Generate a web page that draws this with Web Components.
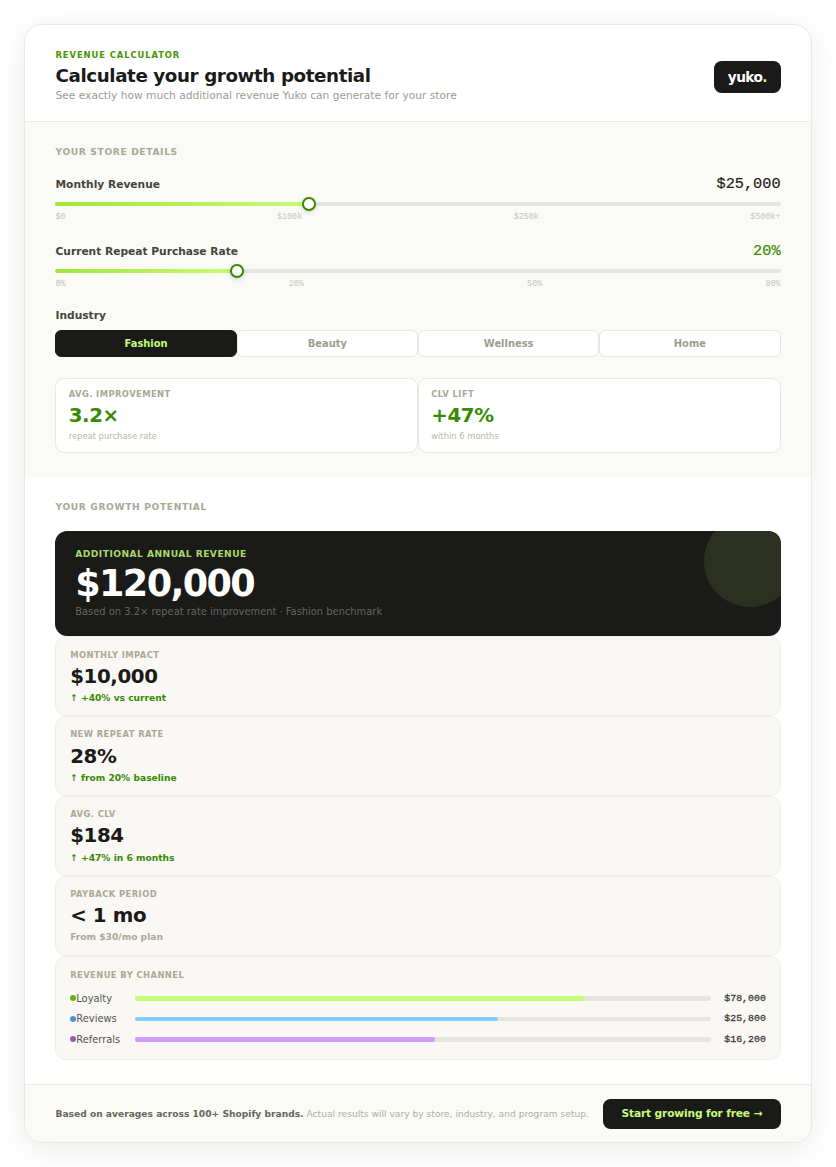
<!DOCTYPE html>
<html lang="en">
<head>
<meta charset="UTF-8">
<title>Yuko Revenue Calculator</title>
<style>
    :root {
        --ink: #1a1a18;
        --lime: #c8fa7a;
        --green: #388a00;
        --muted: #a8a896;
        --line: #e8e8e2;
        --track: #e6e5e0;
        --mono: "Liberation Mono", "Courier New", monospace;
    }

    html {
        background: #fff;
        overflow: hidden;
    }

    body {
        margin: 0;
        font-family: "DejaVu Sans", sans-serif;
        color: var(--ink);
    }

    revenue-calculator {
        zoom: 0.762;
        margin: 32px;
    }
</style>
</head>
<body>
<revenue-calculator>
    <calc-header slot="header" eyebrow="Revenue Calculator" heading="Calculate your growth potential">
        See exactly how much additional revenue Yuko can generate for your store
    </calc-header>

    <calc-section slot="inputs" heading="Your store details" tinted>
        <range-field label="Monthly Revenue" value="$25,000" percent="35" ticks="$0,$100k,$250k,$500k+"></range-field>
        <range-field label="Current Repeat Purchase Rate" value="20%" percent="25" ticks="0%,20%,50%,80%" accent></range-field>
        <option-group label="Industry" options="Fashion,Beauty,Wellness,Home" value="Fashion"></option-group>
        <stat-pair>
            <metric-card class="stat" label="Avg. improvement" value="3.2×">repeat purchase rate</metric-card>
            <metric-card class="stat" label="CLV lift" value="+47%">within 6 months</metric-card>
        </stat-pair>
    </calc-section>

    <calc-section slot="results" heading="Your growth potential">
        <hero-result label="Additional annual revenue" value="$120,000">Based on 3.2× repeat rate improvement · Fashion benchmark</hero-result>
        <metric-card label="Monthly impact" value="$10,000">↑ +40% vs current</metric-card>
        <metric-card label="New repeat rate" value="28%">↑ from 20% baseline</metric-card>
        <metric-card label="Avg. CLV" value="$184">↑ +47% in 6 months</metric-card>
        <metric-card class="neutral" label="Payback period" value="&lt; 1 mo">From $30/mo plan</metric-card>
        <channel-card heading="Revenue by channel">
            <channel-row label="Loyalty" value="$78,000" percent="78" dot="#5cb800" bar="#c8fa7a"></channel-row>
            <channel-row label="Reviews" value="$25,800" percent="63" dot="#4a90d9" bar="#85ccff"></channel-row>
            <channel-row label="Referrals" value="$16,200" percent="52" dot="#9b59b6" bar="#d09cff"></channel-row>
        </channel-card>
    </calc-section>

    <calc-footer slot="footer" action="Start growing for free →">
        <strong slot="lead">Based on averages across 100+ Shopify brands.</strong>
        Actual results will vary by store, industry, and program setup.
    </calc-footer>
</revenue-calculator>

<script>
    class BaseElement extends HTMLElement {
        constructor() {
            super();
            this.attachShadow({mode: 'open'});
        }

        attr(name) {
            return this.getAttribute(name) || "";
        }

        list(name) {
            return this.attr(name).split(",");
        }

        connectedCallback() {
            this.shadowRoot.innerHTML = this.render();
        }
    }

    class RevenueCalculator extends BaseElement {
        render() {
            return `
            <style>
                :host {
                    display: block;
                    box-sizing: border-box;
                    background: #fff;
                    border: 1px solid var(--line);
                    border-radius: 24px;
                    overflow: hidden;
                    box-shadow: 0 8px 40px rgba(0, 0, 0, 0.08);
                }
            </style>
            <slot name="header"></slot>
            <slot name="inputs"></slot>
            <slot name="results"></slot>
            <slot name="footer"></slot>
        `
        }
    }

    class CalcHeader extends BaseElement {
        render() {
            return `
            <style>
                :host {
                    display: flex;
                    justify-content: space-between;
                    align-items: center;
                    padding: 33.2px 39.5px 23.7px;
                    border-bottom: 1px solid #ecebe5;
                }

                .eyebrow {
                    font-size: 11px;
                    line-height: 13px;
                    font-weight: 700;
                    letter-spacing: 0.11em;
                    text-transform: uppercase;
                    color: #459800;
                }

                h1 {
                    margin: 0;
                    padding: 6.3px 0 4.8px;
                    font-size: 24px;
                    line-height: 28px;
                    letter-spacing: -0.022em;
                }

                p {
                    margin: 0;
                    font-size: 14px;
                    line-height: 17px;
                    color: #9c9c92;
                }

                .logo {
                    background: var(--ink);
                    color: #fff;
                    font-size: 18px;
                    line-height: 21px;
                    font-weight: 700;
                    letter-spacing: -0.045em;
                    padding: 10px 18px;
                    border-radius: 10px;
                }

                .logo span {
                    color: var(--lime);
                }
            </style>
            <div>
                <div class="eyebrow">${this.attr("eyebrow")}</div>
                <h1>${this.attr("heading")}</h1>
                <p><slot></slot></p>
            </div>
            <div class="logo">yuko<span>.</span></div>
        `
        }
    }

    class CalcSection extends BaseElement {
        render() {
            return `
            <style>
                :host {
                    display: block;
                    padding: 32px 39.5px;
                }

                :host([tinted]) {
                    background: #fafaf6;
                }

                h2 {
                    margin: 0 0 24px;
                    font-size: 12px;
                    line-height: 14px;
                    letter-spacing: 0.07em;
                    text-transform: uppercase;
                    color: var(--muted);
                }
            </style>
            <h2>${this.attr("heading")}</h2>
            <slot></slot>
        `
        }
    }

    class RangeField extends BaseElement {
        render() {
            return `
            <style>
                :host {
                    display: block;
                    margin-bottom: 28px;
                }

                .top {
                    display: flex;
                    justify-content: space-between;
                    align-items: baseline;
                    height: 23px;
                    margin-bottom: 11px;
                }

                .label {
                    font-size: 14px;
                    font-weight: 700;
                    color: #44443e;
                }

                .value {
                    font: 500 20px/23px var(--mono);
                    -webkit-text-stroke: 0.25px;
                }

                :host([accent]) .value {
                    color: var(--green);
                }

                .track {
                    display: flex;
                    align-items: center;
                    height: 6px;
                    border-radius: 3px;
                    background: var(--track);
                }

                .fill {
                    width: ${this.attr("percent")}%;
                    height: 6px;
                    border-radius: 3px;
                    background: linear-gradient(90deg, #a4e635, var(--lime));
                }

                .thumb {
                    box-sizing: border-box;
                    flex: none;
                    width: 18px;
                    height: 18px;
                    margin-left: -9px;
                    border: 3px solid var(--green);
                    border-radius: 50%;
                    background: #fff;
                    box-shadow: 0 2px 8px rgba(0, 0, 0, 0.15);
                }

                .ticks {
                    display: flex;
                    justify-content: space-between;
                    margin-top: 9px;
                    font: 11px/11px var(--mono);
                    color: #c6c6ba;
                }
            </style>
            <div class="top">
                <span class="label">${this.attr("label")}</span>
                <span class="value">${this.attr("value")}</span>
            </div>
            <div class="track"><div class="fill"></div><div class="thumb"></div></div>
            <div class="ticks">${this.list("ticks").map(tick => `<span>${tick}</span>`).join("")}</div>
        `
        }
    }

    class OptionGroup extends BaseElement {
        render() {
            const value = this.attr("value");
            return `
            <style>
                :host {
                    display: block;
                    margin-bottom: 28px;
                }

                .label {
                    margin-bottom: 10px;
                    font-size: 14px;
                    line-height: 17px;
                    font-weight: 700;
                    color: #44443e;
                }

                .options {
                    display: grid;
                    grid-template-columns: repeat(4, 1fr);
                }

                button {
                    height: 35px;
                    padding: 0;
                    border: 1.5px solid var(--line);
                    border-radius: 8px;
                    background: #fff;
                    font: 700 13px "DejaVu Sans", sans-serif;
                    color: #9c9c90;
                }

                button.active {
                    border-color: var(--ink);
                    background: var(--ink);
                    color: var(--lime);
                }
            </style>
            <div class="label">${this.attr("label")}</div>
            <div class="options">
                ${this.list("options").map(option => `<button class="${option === value ? "active" : ""}">${option}</button>`).join("")}
            </div>
        `
        }

        connectedCallback() {
            super.connectedCallback();
            this.shadowRoot.querySelectorAll("button").forEach(button => {
                button.addEventListener('click', () => {
                    this.setAttribute("value", button.textContent);
                    this.connectedCallback();
                })
            })
        }
    }

    class StatPair extends BaseElement {
        render() {
            return `
            <style>
                :host {
                    display: grid;
                    grid-template-columns: 1fr 1fr;
                }
            </style>
            <slot></slot>
        `
        }
    }

    class MetricCard extends BaseElement {
        render() {
            return `
            <style>
                :host {
                    display: block;
                    box-sizing: border-box;
                    height: 104.8px;
                    padding: 17.3px 18px 17px;
                    border: 1px solid #eeede8;
                    border-radius: 14px;
                    background: #f9f8f4;
                }

                .label {
                    font-size: 11px;
                    line-height: 13px;
                    font-weight: 700;
                    letter-spacing: 0.05em;
                    text-transform: uppercase;
                    color: var(--muted);
                }

                .value {
                    margin: 7px 0 5.5px;
                    font-size: 26px;
                    line-height: 30px;
                    font-weight: 700;
                    letter-spacing: -0.02em;
                }

                .note {
                    font-size: 12px;
                    line-height: 14px;
                    font-weight: 700;
                    color: var(--green);
                }

                :host(.neutral) .note {
                    color: var(--muted);
                }

                :host(.stat) {
                    height: 98px;
                    padding: 14.5px 16px;
                    border-color: var(--line);
                    border-radius: 12px;
                    background: #fff;
                }

                :host(.stat) .value {
                    margin: 6.5px 0 5.5px;
                    color: var(--green);
                }

                :host(.stat) .note {
                    font-size: 11px;
                    line-height: 13px;
                    font-weight: 400;
                    color: #b6b6a8;
                }
            </style>
            <div class="label">${this.attr("label")}</div>
            <div class="value">${this.attr("value").replace("<", "&lt;")}</div>
            <div class="note"><slot></slot></div>
        `
        }
    }

    class HeroResult extends BaseElement {
        render() {
            return `
            <style>
                :host {
                    display: block;
                    position: relative;
                    overflow: hidden;
                    padding: 24.5px 26px 24.3px;
                    border-radius: 16px;
                    background: var(--ink);
                }

                /* lime bubble clipped by the card corner */
                :host::after {
                    content: "";
                    position: absolute;
                    top: -20px;
                    right: -20px;
                    width: 120px;
                    height: 120px;
                    border-radius: 50%;
                    background: var(--lime);
                    opacity: 0.1;
                }

                .label {
                    font-size: 12px;
                    line-height: 14px;
                    font-weight: 700;
                    letter-spacing: 0.05em;
                    text-transform: uppercase;
                    color: #abd86b;
                }

                .value {
                    margin: 7.5px 0 5.5px;
                    font-size: 48px;
                    line-height: 48px;
                    font-weight: 700;
                    letter-spacing: -0.045em;
                    color: #fff;
                }

                .note {
                    font-size: 13px;
                    line-height: 15px;
                    color: #666660;
                }
            </style>
            <div class="label">${this.attr("label")}</div>
            <div class="value">${this.attr("value")}</div>
            <div class="note"><slot></slot></div>
        `
        }
    }

    class ChannelCard extends BaseElement {
        render() {
            return `
            <style>
                :host {
                    display: block;
                    padding: 18px;
                    border: 1px solid #eeede8;
                    border-radius: 14px;
                    background: #f9f8f4;
                }

                h3 {
                    margin: 0 0 15.5px;
                    padding-top: 0.5px;
                    font-size: 11px;
                    line-height: 13px;
                    letter-spacing: 0.05em;
                    text-transform: uppercase;
                    color: var(--muted);
                }

                .rows {
                    display: grid;
                    gap: 12px;
                }
            </style>
            <h3>${this.attr("heading")}</h3>
            <div class="rows"><slot></slot></div>
        `
        }
    }

    class ChannelRow extends BaseElement {
        render() {
            return `
            <style>
                :host {
                    display: flex;
                    align-items: center;
                    height: 15px;
                    font-size: 13px;
                    color: #55554e;
                }

                .dot {
                    width: 8px;
                    height: 8px;
                    border-radius: 50%;
                    background: ${this.attr("dot")};
                }

                .label {
                    width: 77.5px;
                }

                .track {
                    flex: 1;
                    height: 6px;
                    border-radius: 3px;
                    background: var(--track);
                }

                .fill {
                    width: ${this.attr("percent")}%;
                    height: 6px;
                    border-radius: 3px;
                    background: ${this.attr("bar")};
                }

                .value {
                    width: 71.5px;
                    text-align: right;
                    font: 500 13px/15px var(--mono);
                    -webkit-text-stroke: 0.35px;
                    color: #3a3a36;
                }
            </style>
            <span class="dot"></span>
            <span class="label">${this.attr("label")}</span>
            <div class="track"><div class="fill"></div></div>
            <span class="value">${this.attr("value")}</span>
        `
        }
    }

    class CalcFooter extends BaseElement {
        render() {
            return `
            <style>
                :host {
                    display: flex;
                    justify-content: space-between;
                    align-items: center;
                    padding: 18px 39.5px;
                    border-top: 1px solid #ecebe5;
                    background: #fafaf6;
                    font-size: 12px;
                    color: #b0b0a2;
                }

                ::slotted(strong) {
                    color: #66665c;
                }

                button {
                    height: 39px;
                    padding: 0 24px;
                    border: 0;
                    border-radius: 10px;
                    background: var(--ink);
                    font: 700 14px "DejaVu Sans", sans-serif;
                    letter-spacing: -0.015em;
                    color: var(--lime);
                }
            </style>
            <div><slot name="lead"></slot> <slot></slot></div>
            <button>${this.attr("action")}</button>
        `
        }
    }

    customElements.define('revenue-calculator', RevenueCalculator);
    customElements.define('calc-header', CalcHeader);
    customElements.define('calc-section', CalcSection);
    customElements.define('range-field', RangeField);
    customElements.define('option-group', OptionGroup);
    customElements.define('stat-pair', StatPair);
    customElements.define('metric-card', MetricCard);
    customElements.define('hero-result', HeroResult);
    customElements.define('channel-card', ChannelCard);
    customElements.define('channel-row', ChannelRow);
    customElements.define('calc-footer', CalcFooter);
</script>
</body>
</html>
